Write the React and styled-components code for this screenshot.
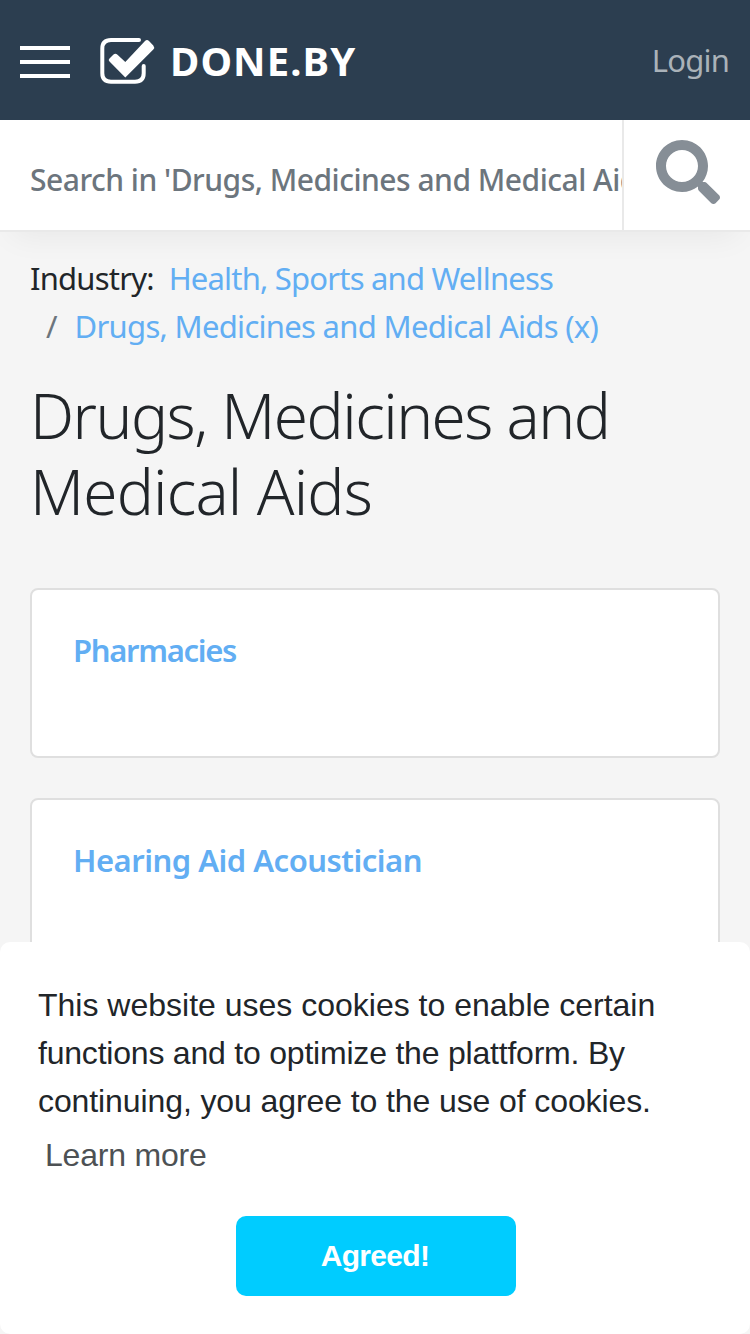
import React from "react";
import styled, { createGlobalStyle } from "styled-components";
import { FaSearch } from "react-icons/fa";

const GlobalStyle = createGlobalStyle`
  * {
    box-sizing: border-box;
  }
  body {
    margin: 0;
    height: 1334px;
    overflow: hidden;
    background: #f5f5f5;
    color: #212529;
    font-family: "Noto Sans", "Open Sans", sans-serif;
    font-size: 31px;
    line-height: 48px;
  }
`;

const Page = styled.div`
  height: 1334px;
  overflow: hidden;
`;

const Header = styled.header`
  display: flex;
  align-items: center;
  height: 120px;
  padding: 4px 20px 0;
  background: #2c3e50;
`;

const MenuButton = styled.div`
  display: flex;
  flex-direction: column;
  gap: 10px;
  width: 50px;
  margin-right: 30px;
`;

const MenuBar = styled.span`
  height: 4px;
  background: #fff;
`;

const Brand = styled.div`
  margin: 0 0 2px 15px;
  color: #fff;
  font-size: 40px;
  font-weight: 700;
  letter-spacing: 1.1px;
  white-space: nowrap;
`;

const Login = styled.a`
  margin: 0 1px 4px auto;
  color: #aab2b9;
  letter-spacing: -0.8px;
`;

const SearchBar = styled.div`
  display: flex;
  height: 112px;
  background: #fff;
  border-bottom: 2px solid #e9e9e9;
  box-shadow: 0 16px 32px -12px rgba(0, 0, 0, 0.06);
`;

const SearchInput = styled.input`
  flex: 1;
  min-width: 0;
  padding: 8px 0 0 30px;
  border: 0;
  outline: 0;
  background: transparent;
  font-family: inherit;
  font-size: 30px;
  font-weight: 500;
  letter-spacing: -0.5px;
  &::placeholder {
    color: #6c757d;
    opacity: 1;
  }
`;

const SearchButton = styled.div`
  width: 128px;
  padding: 20px 0 0 32px;
  border-left: 2px solid #e9e9e9;
  color: #868e96;
`;

const Content = styled.main`
  padding: 22px 30px 0;
`;

const Breadcrumb = styled.div`
  white-space: nowrap;
`;

const Label = styled.span`
  letter-spacing: -0.8px;
`;

const Crumb = styled.a`
  margin-left: ${props => props.$gap}px;
  color: #62aef3;
  letter-spacing: ${props => props.$spacing}px;
`;

const Slash = styled.span`
  margin-left: 16px;
  color: #6c757d;
`;

const Title = styled.h1`
  margin: 27px 0 59px;
  font-size: 62px;
  font-weight: 300;
  line-height: 76px;
`;

const TitleLine = styled.span`
  display: block;
  letter-spacing: ${props => props.$spacing}px;
`;

const Card = styled.div`
  height: 170px;
  margin-bottom: 40px;
  padding: 36px 41px;
  background: #fff;
  border: 2px solid #dfdfdf;
  border-radius: 8px;
`;

const CardLink = styled.a`
  color: #62aef3;
  font-weight: 600;
  letter-spacing: ${props => props.$spacing}px;
`;

const CookieBox = styled.div`
  position: fixed;
  left: 0;
  right: 0;
  bottom: 0;
  height: 392px;
  padding: 39px 38px 38px;
  background: #fff;
  border-radius: 10px;
  font-family: "Liberation Sans", Arial, sans-serif;
  font-size: 32px;
`;

const CookieText = styled.p`
  margin: 0;
  white-space: nowrap;
`;

const CookieLine = styled.span`
  display: block;
  letter-spacing: ${props => props.$spacing}px;
`;

const LearnMore = styled.a`
  display: block;
  margin: 6px 0 0 7px;
  color: #4d5154;
  letter-spacing: -0.2px;
`;

const AgreeButton = styled.button`
  display: block;
  width: 280px;
  height: 80px;
  margin: 37px 0 0 198px;
  padding: 0 8px 0 6px;
  border: 0;
  border-radius: 10px;
  background: #00ccff;
  color: #fff;
  font-family: inherit;
  font-size: 30px;
  font-weight: 700;
  letter-spacing: -0.7px;
`;

const Logo = () => (
  <svg width="55" height="48" viewBox="0 0 55 48" fill="none">
    <path
      d="M39 2H11Q2.3 2 2.3 10.5V35.3Q2.3 43.7 11 43.7H35Q43.7 43.7 43.7 35.3V28"
      stroke="#fff"
      strokeWidth="4"
      strokeLinecap="round"
    />
    <path
      d="M9.5 20.5L13.5 16.5Q15.5 15 17.5 16.8L25.3 24L45 3Q47 1.2 49 3L53.3 7.5Q55 9.5 53.3 11.5L25.3 39.5L9.5 23.5Q7.8 22 9.5 20.5Z"
      fill="#fff"
    />
  </svg>
);

const services = [
  { name: "Pharmacies", spacing: -1.3 },
  { name: "Hearing Aid Acoustician", spacing: -0.5 },
];

const App = () => {
  return (
    <Page>
      <GlobalStyle />
      <Header>
        <MenuButton>
          <MenuBar />
          <MenuBar />
          <MenuBar />
        </MenuButton>
        <Logo />
        <Brand>DONE.BY</Brand>
        <Login>Login</Login>
      </Header>
      <SearchBar>
        <SearchInput placeholder="Search in 'Drugs, Medicines and Medical Aids'" />
        <SearchButton>
          <FaSearch size={64} />
        </SearchButton>
      </SearchBar>
      <Content>
        <Breadcrumb>
          <Label>Industry:</Label>
          <Crumb $gap={15} $spacing={-0.8}>Health, Sports and Wellness</Crumb>
        </Breadcrumb>
        <Breadcrumb>
          <Slash>/</Slash>
          <Crumb $gap={17} $spacing={-0.7}>Drugs, Medicines and Medical Aids (x)</Crumb>
        </Breadcrumb>
        <Title>
          <TitleLine $spacing={-1.5}>Drugs, Medicines and</TitleLine>
          <TitleLine $spacing={-0.8}>Medical Aids</TitleLine>
        </Title>
        {services.map(({ name, spacing }) => (
          <Card key={name}>
            <CardLink $spacing={spacing}>{name}</CardLink>
          </Card>
        ))}
      </Content>
      <CookieBox>
        <CookieText>
          <CookieLine $spacing={0}>This website uses cookies to enable certain</CookieLine>
          <CookieLine $spacing={-0.21}>functions and to optimize the plattform. By</CookieLine>
          <CookieLine $spacing={-0.1}>continuing, you agree to the use of cookies.</CookieLine>
        </CookieText>
        <LearnMore>Learn more</LearnMore>
        <AgreeButton>Agreed!</AgreeButton>
      </CookieBox>
    </Page>
  );
};

export default App;
